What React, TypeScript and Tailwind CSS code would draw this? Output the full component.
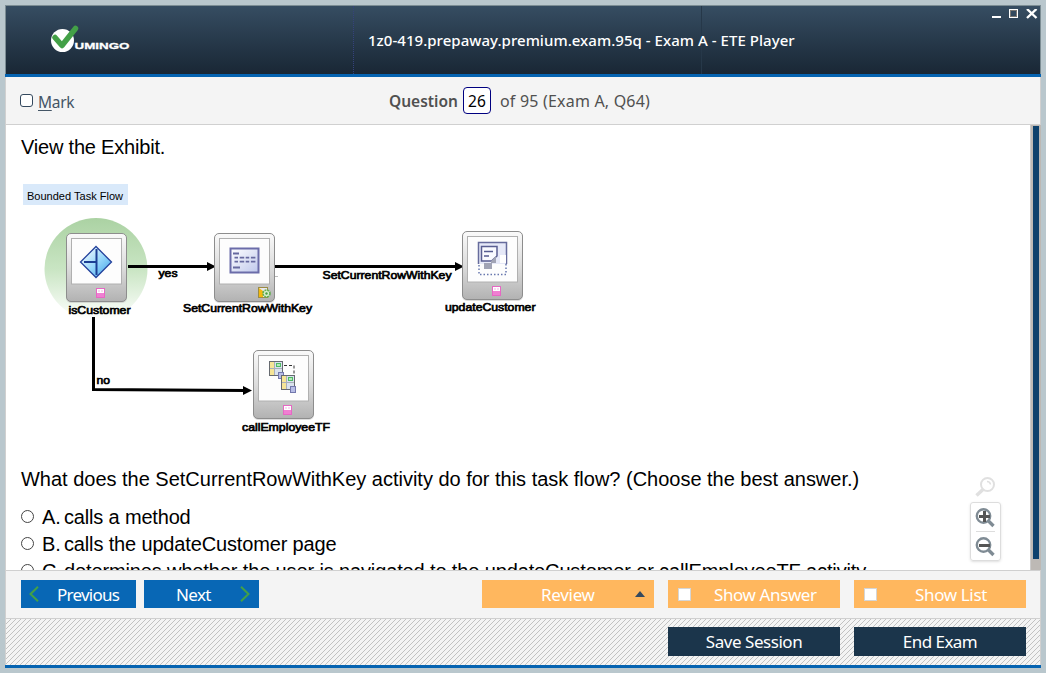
import React from "react";

const ui = "font-['Noto_Sans',sans-serif]";

function Logo() {
  return (
    <svg className="block" width="84" height="32" viewBox="48 24 84 32">
      <circle cx="62.5" cy="40.5" r="11.5" fill="#fff" />
      <path d="M55 37.5 L62 45.500 L75.500 28.500" fill="none" stroke="#43a047" strokeWidth="5.5" strokeLinecap="round" strokeLinejoin="round" />
      <text x="74.5" y="49" fontSize="9.8" fontWeight="700" fill="#fff" stroke="#fff" strokeWidth=".3" textLength="55" lengthAdjust="spacingAndGlyphs" fontFamily="Liberation Sans, sans-serif">UMINGO</text>
    </svg>
  );
}

function Device({ x, y, children, badge = true }: { x: number; y: number; children: React.ReactNode; badge?: boolean }) {
  return (
    <g transform={`translate(${x} ${y})`}>
      <rect x="0" y="1" width="61" height="69" rx="5" fill="#bbb" opacity=".5" />
      <rect x=".5" y=".5" width="60" height="68" rx="4.5" fill="url(#body)" stroke="#8d8d8d" />
      <rect x="5.5" y="5.5" width="50" height="45.5" fill="#fdfdfd" stroke="#b0b0b0" />
      {children}
      {badge && (
        <g>
          <rect x="30.5" y="55.5" width="8" height="9" fill="#fff" stroke="#e668c4" />
          <path d="M32 58h2m1 0h2" stroke="#f3b5e4" />
          <rect x="31" y="60" width="7" height="4" fill="#f07fd2" />
        </g>
      )}
    </g>
  );
}

function Label({ x, y, w, children }: { x: number; y: number; w: number; children: string }) {
  return (
    <text x={x} y={y} textLength={w} fontSize="11.5" stroke="#000" strokeWidth=".7" lengthAdjust="spacingAndGlyphs">
      {children}
    </text>
  );
}

function TaskMini({ x, y }: { x: number; y: number }) {
  return (
    <g transform={`translate(${x} ${y})`}>
      <rect x=".5" y=".5" width="13" height="14" fill="#d9e2ee" stroke="#666a70" />
      <rect x="1" y="1" width="4" height="13" fill="#f6e596" />
      <path d="M5.5 1v13M1 7.5h12" stroke="#a9afba" />
      <rect x="7.5" y="2.5" width="4" height="3" fill="#b5eab9" stroke="#4fbb62" />
      <rect x="9.5" y="11.5" width="5" height="6" fill="#b7bde6" stroke="#7378ad" />
    </g>
  );
}

function Diagram() {
  return (
    <svg className="block" width="540" height="260" viewBox="20 180 540 260" fontFamily="Liberation Sans, Arial, sans-serif">
      <defs>
        <linearGradient id="body" x1="0" y1="0" x2="0" y2="1">
          <stop offset="0" stopColor="#fafafa" />
          <stop offset=".5" stopColor="#dcdcdc" />
          <stop offset="1" stopColor="#b2b2b2" />
        </linearGradient>
        <linearGradient id="halo" x1="0" y1="0" x2="0" y2="1">
          <stop offset="0" stopColor="#abd2a3" />
          <stop offset=".5" stopColor="#c9e5c3" />
          <stop offset="1" stopColor="#fff" />
        </linearGradient>
        <linearGradient id="gem" x1="0" y1="0" x2="1" y2="1">
          <stop offset=".1" stopColor="#f4fbff" />
          <stop offset=".55" stopColor="#93d5fa" />
          <stop offset="1" stopColor="#389ce5" />
        </linearGradient>
        <linearGradient id="form" x1="0" y1="0" x2="1" y2="1">
          <stop offset="0" stopColor="#fff" />
          <stop offset="1" stopColor="#bfc8ec" />
        </linearGradient>
      </defs>
      <rect x="23" y="184" width="105" height="21" fill="#d9e9fa" />
      <text x="27" y="200" fontSize="11" textLength="96" lengthAdjust="spacingAndGlyphs">Bounded Task Flow</text>
      <ellipse cx="96" cy="269" rx="51.5" ry="51" fill="url(#halo)" />
      <g stroke="#000" strokeWidth="3" fill="none">
        <path d="M128 266.5H209" />
        <path d="M275 266.5H457" />
        <path d="M93.500 317V389.500L246 390.500" />
      </g>
      <path d="M207 262l9 4.500-9 4.500zM455 262l9 4.500-9 4.500zM243 386l9 4.500-9 4.500z" />

      <Device x={66} y={233}>
        <path d="M30 13.500L45.500 29 30 44.500 14.500 29z" fill="url(#gem)" stroke="#24429c" strokeWidth="1.300" />
        <path d="M30.500 16V42M18 29H30" stroke="#1c3f94" strokeWidth="2" />
      </Device>

      <Device x={214} y={233} badge={false}>
        <rect x="16.500" y="15.500" width="28" height="24" fill="url(#form)" stroke="#6b6ca9" strokeWidth="2" />
        <path d="M19 20.500h6M19 34.500h7" stroke="#66699f" strokeWidth="1.800" />
        <path d="M20.500 24.700h22M20.500 28.600h22" stroke="#66699f" strokeWidth="1.800" strokeDasharray="3.500 1.700 4.500 1.500" />
        <rect x="44.500" y="54.500" width="9" height="10" fill="#e8e8ef" stroke="#9b8c45" />
        <path d="M45 55l4 3v6h-4z" fill="#f4b80d" />
        <circle cx="52.500" cy="60.500" r="3.500" fill="#d9f0ce" stroke="#65ae55" strokeWidth="1.700" strokeDasharray="2 .8" />
        <circle cx="52.500" cy="60.500" r="1.200" fill="#4b9e42" />
      </Device>

      <Device x={462} y={231}>
        <path d="M16.500 33V11.500H44.500V33" fill="#e6e9f8" stroke="#666b9c" strokeWidth="1.500" />
        <path d="M17 34V43.500H44V33" fill="none" stroke="#6777ae" strokeWidth="1.500" strokeDasharray="1.500 2" />
        <path d="M19.500 15.500H35V25L29.500 30H19.500z" fill="#f9faff" stroke="#595e91" strokeWidth="1.500" />
        <path d="M22 20.500h9M22 25h5" stroke="#555b91" strokeWidth="1.500" />
        <path d="M29 30l5-5v7H30v6H22V32h7z" fill="#a1a4b5" />
        <path d="M38 24h6v8h-6z" fill="#fff" />
      </Device>

      <Device x={253} y={350}>
        <TaskMini x={16} y={11} />
        <TaskMini x={28} y={25} />
        <path d="M31 15.500h10v8" fill="none" stroke="#333" strokeDasharray="3 2" />
      </Device>

      <Label x={158.500} y={277} w={19}>yes</Label>
      <Label x={68.500} y={314} w={62}>isCustomer</Label>
      <Label x={183} y={312} w={129}>SetCurrentRowWithKey</Label>
      <Label x={322.500} y={279} w={129}>SetCurrentRowWithKey</Label>
      <Label x={445} y={310.500} w={90.500}>updateCustomer</Label>
      <Label x={96.500} y={383.500} w={13.500}>no</Label>
      <Label x={242} y={431} w={88}>callEmployeeTF</Label>
      <path d="M275 276.500h3" stroke="#bbb" />
    </svg>
  );
}

function Lens({ sign }: { sign: "plus" | "minus" }) {
  return (
    <svg className="block" width="20" height="20" viewBox="0 0 20 20" fill="none">
      <circle cx="8.500" cy="8" r="6.700" stroke="#7f8b94" strokeWidth="2.400" />
      <path d="M13.500 13L18.500 18" stroke="#7f8b94" strokeWidth="3.400" />
      <path d="M4 8.500H15" stroke="#555" strokeWidth="3" />
      {sign === "plus" && <path d="M9.500 3V14" stroke="#555" strokeWidth="3" />}
    </svg>
  );
}

function Answer({ letter, children, spacing }: { letter: string; children: string; spacing: string }) {
  return (
    <div className="flex h-[27px] items-center whitespace-nowrap">
      <span className="-mt-[3px] h-[13px] w-[13px] shrink-0 rounded-full border border-[#444] bg-white" />
      <span className="ml-[8px] w-[22px] shrink-0">{letter}.</span>
      <span className={spacing}>{children}</span>
    </div>
  );
}

export default function App() {
  return (
    <div className="flex h-[673px] w-[1046px] flex-col overflow-hidden bg-[#b9c7cd] px-[5px] pt-[5px]">
      <header className="flex h-[69px] shrink-0 border border-b-0 border-[#7c8d94] bg-gradient-to-b from-[#364d62] to-[#192735]">
        <div className="h-full w-[348px] border-r border-dotted border-[#35427c] pt-[18px] pl-[42px]">
          <Logo />
        </div>
        <div className={`flex h-full w-[348px] items-center border-r border-[#263849] pl-[14px] text-[15px] font-medium whitespace-nowrap text-white ${ui}`}>
          <span className="tracking-[0.04px]">1z0-419.prepaway.premium.exam.95q - Exam A - ETE Player</span>
        </div>
        <div className="flex flex-1 justify-end pt-[3px] pr-[2px]">
          <svg className="block" width="46" height="10" viewBox="0 0 46 10" fill="none" stroke="#fff">
            <path d="M0 8H9" strokeWidth="2" />
            <rect x="17.500" y=".5" width="8" height="8" />
            <rect x="18.500" y="1.500" width="6" height="6" stroke="#7b7772" />
            <path d="M35 0L44.500 9M44.500 0L35 9" strokeWidth="2.400" />
          </svg>
        </div>
      </header>
      <div className="h-[3px] shrink-0 bg-[#0563b1]" />

      <div className={`flex h-[48px] shrink-0 items-center border-x border-b border-[#d0d0d0] bg-[#f4f4f4] text-[16px] whitespace-nowrap text-[#505050] ${ui}`}>
        <span className="ml-[14px] h-[13px] w-[13px] rounded-[3px] border border-[#34495e] bg-white" />
        <span className="ml-[5px] w-[351px] pt-[5px] text-[15.500px] tracking-[-0.3px] text-[#445566]"><u className="underline-offset-2">M</u>ark</span>
        <span className="pt-[2px] text-[15.500px] font-semibold">Question</span>
        <span className="ml-[5px] flex h-[27px] w-[28px] items-center justify-center rounded-[4px] border border-[#000080] bg-white pt-[2px] text-[15.500px] text-black">26</span>
        <span className="ml-[9px] pt-px tracking-[0.2px]">of 95 (Exam A, Q64)</span>
      </div>

      <div className="flex h-[445px] shrink-0 overflow-hidden border-l border-[#d0d0d0] bg-white">
        <main className="flex h-full w-[1024px] flex-col overflow-hidden pl-[15px] font-['Liberation_Sans',Arial,sans-serif] text-[20px] leading-[27px] text-black">
          <p className="mt-[9px] h-[27px] shrink-0 tracking-[-0.2px] whitespace-nowrap">View the Exhibit.</p>
          <div className="mt-[19px] -ml-px h-[260px] shrink-0"><Diagram /></div>
          <div className="flex shrink-0 pt-[26px]">
            <div className="w-[949px] shrink-0">
              <p className="mb-[11px] h-[27px] tracking-[-0.012px] whitespace-nowrap">What does the SetCurrentRowWithKey activity do for this task flow? (Choose the best answer.)</p>
              <Answer letter="A" spacing="tracking-[-0.17px]">calls a method</Answer>
              <Answer letter="B" spacing="tracking-[-0.15px]">calls the updateCustomer page</Answer>
              <Answer letter="C" spacing="tracking-[-0.13px]">determines whether the user is navigated to the updateCustomer or callEmployeeTF activity</Answer>
            </div>
            <div className="flex h-[95px] w-[31px] flex-col items-center pt-[11px]">
              <svg className="mr-[2px] block shrink-0" width="20" height="20" viewBox="0 0 20 20" fill="none" stroke="#e0e0e0">
                <circle cx="12.500" cy="7.500" r="6.500" strokeWidth="2" />
                <path d="M8.500 12L1.500 18.500" strokeWidth="3.500" />
                <path d="M12 4.500Q15 4.500 15.500 7.500" strokeWidth="1.500" />
              </svg>
              <div className="mt-[5px] flex h-[59px] w-[31px] shrink-0 flex-col items-center rounded-[3px] border border-[#ddd] pt-[5px] pr-px shadow-sm">
                <Lens sign="plus" />
                <div className="mt-[3px] mb-[5px] h-px w-[19px] bg-[#ddd]" />
                <Lens sign="minus" />
              </div>
            </div>
          </div>
        </main>
        <div className="h-full w-[11px] border-l border-[#ccc] bg-[#bdb9b5] pt-px pl-[2px]">
          <div className="h-[433px] w-[6px] bg-[#0d416d]" />
        </div>
      </div>

      <div className={`flex h-[48px] shrink-0 items-start border-x border-t border-[#d0d0d0] bg-[#f4f4f4] pt-[9px] pr-[14px] pl-[15px] text-[17px] text-white ${ui}`}>
        <button className="flex h-[28px] w-[115px] items-center bg-[#0867b5] pl-[8px]">
          <svg width="10" height="16" viewBox="0 0 10 16" fill="none" stroke="#43a047" strokeWidth="2"><path d="M9 .8L1.500 8 9 15.200" /></svg>
          <span className="ml-[18px] pt-[2px] tracking-[-0.75px]">Previous</span>
        </button>
        <button className="ml-[8px] flex h-[28px] w-[115px] items-center bg-[#0867b5] pl-[32px]">
          <span className="w-[64px] pt-[2px] text-left tracking-[-0.6px]">Next</span>
          <svg width="10" height="16" viewBox="0 0 10 16" fill="none" stroke="#43a047" strokeWidth="2"><path d="M1 .8L8.500 8 1 15.200" /></svg>
        </button>
        <button className="ml-[223px] flex h-[28px] w-[172px] items-center bg-[#ffb75e] pl-[59px]">
          <span className="w-[94px] pt-[2px] text-left tracking-[-0.3px]">Review</span>
          <svg width="10" height="6" viewBox="0 0 10 6"><path d="M0 6L5 0l5 6z" fill="#34495e" /></svg>
        </button>
        <button className="ml-[14px] flex h-[28px] w-[172px] items-center bg-[#ffb75e] pl-[10px]">
          <span className="h-[13px] w-[13px] border border-[#d5d5d5] bg-white" />
          <span className="ml-[23px] pt-[2px] tracking-[-0.4px] whitespace-nowrap">Show Answer</span>
        </button>
        <button className="ml-[14px] flex h-[28px] w-[172px] items-center bg-[#ffb75e] pl-[10px]">
          <span className="h-[13px] w-[13px] border border-[#d5d5d5] bg-white" />
          <span className="ml-[38px] pt-[2px] tracking-[-0.35px] whitespace-nowrap">Show List</span>
        </button>
      </div>

      <div className={`flex h-[47px] shrink-0 justify-end gap-[14px] border-x border-t border-[#d0d0d0] bg-[#f4f4f4] bg-[linear-gradient(135deg,transparent_44%,#c2c2c2_44%,#c2c2c2_56%,transparent_56%)] bg-[length:5px_5px] pt-[8px] pr-[14px] text-[17px] text-white ${ui}`}>
        <button className="h-[29px] w-[172px] bg-[#1b354b] tracking-[-0.45px]">Save Session</button>
        <button className="h-[29px] w-[172px] bg-[#1b354b] tracking-[-0.55px]">End Exam</button>
      </div>
      <div className="h-[3px] shrink-0 bg-[#0563b1]" />
    </div>
  );
}
